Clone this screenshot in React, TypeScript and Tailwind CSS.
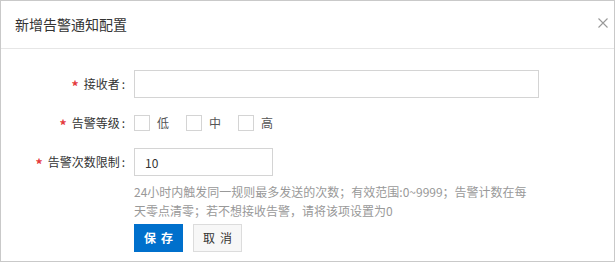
import { useState } from "react";

const FONT = { fontFamily: '"Noto Sans CJK SC", "Noto Sans", Arial, sans-serif' };

const levels = ["低", "中", "高"];

const Label = ({ text }: { text: string }) => (
  <div className="w-[126px] shrink-0 flex items-center justify-end text-[12px] text-[#333]">
    <span className="text-[#e4393c] mr-[5px] text-[14px] font-bold leading-none mt-[3px]">*</span>
    <span>{text}</span>
    <span className="ml-[2px] mr-[2px]">:</span>
  </div>
);

const App = () => {
  const [checked, setChecked] = useState<Record<string, boolean>>({});
  const [limit, setLimit] = useState("10");

  return (
    <div style={FONT} className="w-[615px] h-[262px] border border-[#c9c9c9] bg-white box-border flex flex-col">
      <div className="h-[48px] shrink-0 border-b border-[#e6e6e6] flex items-center justify-between pl-[14px] pr-[5px]">
        <span className="text-[14px] text-[#333]">新增告警通知配置</span>
        <button type="button" className="w-[10px] h-[10px] mr-[1px] mb-[4px] text-[#999]">
          <svg width="10" height="10" viewBox="0 0 10 10" stroke="currentColor" strokeWidth="1.1" fill="none">
            <path d="M0.5 0.5 L9.5 9.5 M9.5 0.5 L0.5 9.5" />
          </svg>
        </button>
      </div>

      <div className="pt-[21px]">
        <div className="flex h-[28px] mb-[11px]">
          <Label text="接收者" />
          <input className="ml-[7px] w-[405px] h-[28px] border border-[#d4d4d4] outline-none px-[10px] text-[12px]" />
        </div>

        <div className="flex h-[28px] mb-[11px]">
          <Label text="告警等级" />
          <div className="ml-[7px] flex items-center">
            {levels.map((l) => (
              <label key={l} className="flex items-center mr-[17px] cursor-pointer" onClick={() => setChecked((c) => ({ ...c, [l]: !c[l] }))}>
                <span className={`w-[16px] h-[16px] border ${checked[l] ? "border-[#0070cc] bg-[#0070cc]" : "border-[#d4d4d4] bg-white"}`} />
                <span className="ml-[7px] text-[12px] text-[#555]">{l}</span>
              </label>
            ))}
          </div>
        </div>

        <div className="flex h-[28px]">
          <Label text="告警次数限制" />
          <input
            value={limit}
            onChange={(e) => setLimit(e.target.value)}
            className="ml-[7px] w-[139px] h-[28px] border border-[#d4d4d4] outline-none px-[10px] text-[12px] text-[#333]"
          />
        </div>

        <div className="ml-[133px] mt-[6px] text-[12px] leading-[19px] text-[#999]">
          24小时内触发同一规则最多发送的次数；有效范围:0~9999；告警计数在每
          <br />
          天零点清零；若不想接收告警，请将该项设置为0
        </div>

        <div className="ml-[133px] mt-[4px] flex gap-[10px]">
          <button type="button" className="w-[49px] h-[28px] bg-[#0070cc] text-white text-[12px] font-bold flex items-center justify-center gap-[5px]">
            <span>保</span>
            <span>存</span>
          </button>
          <button type="button" className="w-[49px] h-[28px] bg-[#f7f7f7] border border-[#dcdcdc] text-[#333] text-[12px] flex items-center justify-center gap-[5px]">
            <span>取</span>
            <span>消</span>
          </button>
        </div>
      </div>
    </div>
  );
};

export default App;
